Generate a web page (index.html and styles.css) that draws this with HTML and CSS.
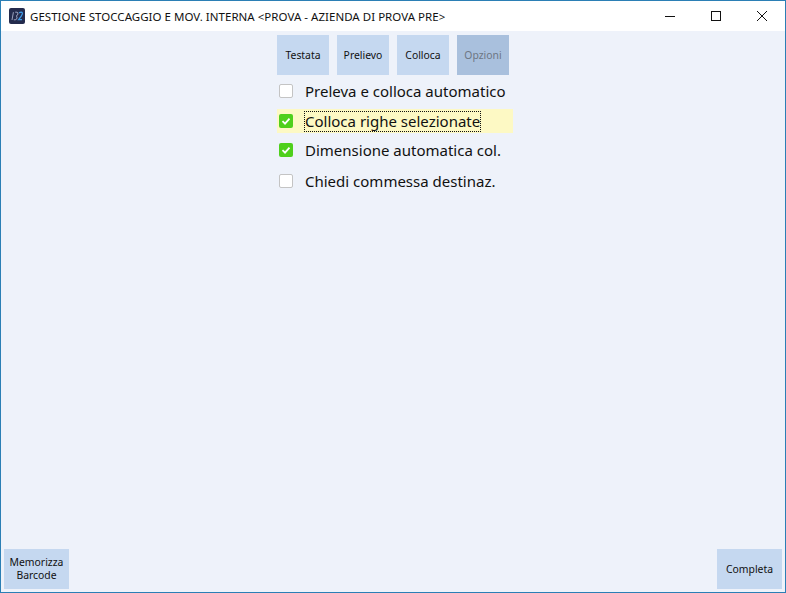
FILE: index.html
```html
<!DOCTYPE html>
<html lang="it">
<head>
<meta charset="utf-8">
<title>Gestione stoccaggio</title>
<link rel="stylesheet" href="styles.css">
</head>
<body>
<div class="window">
  <header class="titlebar">
    <svg class="logo" width="16" height="16" viewBox="0 0 16 16">
      <rect width="16" height="16" rx="2" fill="#242b4d"/>
      <path d="M3 12 L4.4 4.2 M6.2 4.2 H8 Q9.2 4.2 8.9 6 Q8.6 7.6 7.2 8 Q8.4 8.4 8 10 Q7.6 11.8 6.2 11.8 H4.8" fill="none" stroke="#aab1cc" stroke-width="0.9"/>
      <path d="M10.2 5 Q11 4.2 12.3 4.2 Q13.8 4.4 13.3 6 Q12.8 7.8 9.6 11.6 H13" fill="none" stroke="#3f9be8" stroke-width="1.2"/>
    </svg>
    <span class="title">GESTIONE STOCCAGGIO E MOV. INTERNA &lt;PROVA - AZIENDA DI PROVA PRE&gt;</span>
    <div class="controls">
      <svg class="ctl" width="46" height="30" viewBox="0 0 46 30"><path d="M18 15.5 H28" stroke="#111" fill="none"/></svg>
      <svg class="ctl" width="46" height="30" viewBox="0 0 46 30"><rect x="18.5" y="10.5" width="9" height="9" stroke="#111" fill="none"/></svg>
      <svg class="ctl" width="46" height="30" viewBox="0 0 46 30"><path d="M18 10 L28 20 M28 10 L18 20" stroke="#111" fill="none"/></svg>
    </div>
  </header>
  <main class="content">
    <div class="panel">
      <nav class="tabs">
        <div class="btn tab">Testata</div>
        <div class="btn tab">Prelievo</div>
        <div class="btn tab">Colloca</div>
        <div class="btn tab tab-active">Opzioni</div>
      </nav>
      <ul class="options">
        <li class="option"><span class="box"></span><span class="label">Preleva e colloca automatico</span></li>
        <li class="option option-focus"><span class="box box-on"><svg width="14" height="14" viewBox="0 0 14 14"><path d="M3.5 7.2 L6 9.6 L10.5 4.6" fill="none" stroke="#fff" stroke-width="1.8"/></svg></span><span class="label label-focus">Colloca righe selezionate</span></li>
        <li class="option"><span class="box box-on"><svg width="14" height="14" viewBox="0 0 14 14"><path d="M3.5 7.2 L6 9.6 L10.5 4.6" fill="none" stroke="#fff" stroke-width="1.8"/></svg></span><span class="label">Dimensione automatica col.</span></li>
        <li class="option option-last"><span class="box"></span><span class="label">Chiedi commessa destinaz.</span></li>
      </ul>
    </div>
    <footer class="actions">
      <div class="btn action">Memorizza<br>Barcode</div>
      <div class="btn action">Completa</div>
    </footer>
  </main>
</div>
</body>
</html>
```
FILE: styles.css
```css
* { box-sizing: border-box; }
html, body { margin: 0; padding: 0; height: 100%; }
body { font-family: "Noto Sans", "Open Sans", sans-serif; color: #111; background: #eef2fa; overflow: hidden; }
.window { width: 786px; height: 593px; display: flex; flex-direction: column; border: 1px solid #2b7fb5; }
.titlebar { height: 30px; flex: none; display: flex; align-items: center; background: #fff; padding-left: 8px; }
.logo { flex: none; }
.title { margin-left: 5px; font-size: 11.5px; white-space: nowrap; letter-spacing: 0.03px; }
.controls { margin-left: auto; display: flex; }
.ctl { display: block; }
.content { flex: 1; display: flex; flex-direction: column; justify-content: space-between; background: #eef2fa; }
.panel { padding: 4px 0 0 276px; }
.tabs { display: flex; gap: 8px; }
.btn { background: #c5d8f0; display: flex; align-items: center; justify-content: center; text-align: center; font-size: 10.4px; line-height: 13px; }
.tab { width: 52px; height: 40px; }
.tab-active { background: #a9c0dd; color: #6d7683; }
.options { list-style: none; margin: 1px 0 0; padding: 0; width: 236px; }
.option { height: 30px; display: flex; align-items: center; padding-left: 2px; font-size: 15px; white-space: nowrap; }
.option-focus { height: 24px; margin: 3px 0 2px; background: #fdf9c4; }
.option-last { margin-top: 1px; }
.box { width: 14px; height: 14px; border-radius: 2px; background: #fff; border: 1px solid #c4c4c4; flex: none; display: block; }
.box svg { display: block; }
.box-on { background: #4fd01c; border: 0; }
.label { margin-left: 12px; }
.label-focus { outline: 1px dotted #111; outline-offset: -1px; margin-left: 11px; padding: 0 1px; line-height: 21px; }
.actions { display: flex; justify-content: space-between; padding: 0 3px 3px 3px; }
.action { width: 65px; height: 40px; }
```
